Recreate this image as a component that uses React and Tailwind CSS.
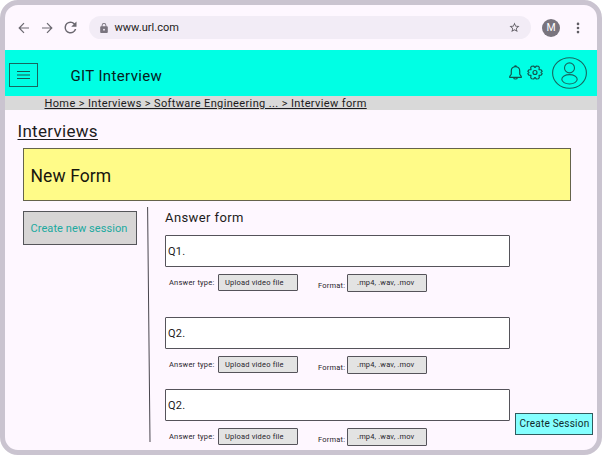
import React from 'react';

function BrowserBar() {
  return (
    <div className="flex h-[45px] shrink-0 items-center text-[#6b6870]">
      <svg className="ml-[12px] h-[14px] w-[14px]" viewBox="0 0 14 14" fill="none" stroke="currentColor" strokeWidth="1.2">
        <path d="M12 7H2.2M7 2.2L2.2 7L7 11.8" />
      </svg>
      <svg className="ml-[9px] h-[14px] w-[14px]" viewBox="0 0 14 14" fill="none" stroke="currentColor" strokeWidth="1.2">
        <path d="M2 7h9.8M7 2.2L11.8 7L7 11.8" />
      </svg>
      <svg className="ml-[9px] h-[15px] w-[15px]" viewBox="2 2 20 20" fill="currentColor">
        <path d="M17.65 6.35A7.96 7.96 0 0 0 12 4a8 8 0 1 0 7.73 10h-2.08A6 6 0 1 1 12 6c1.66 0 3.14.69 4.22 1.78L13 11h7V4z" />
      </svg>
      <div className="ml-[11px] flex h-[23px] w-[442px] items-center rounded-full bg-[#f2ecf6]">
        <svg className="ml-[11px] h-[10px] w-[8px]" viewBox="4 1 16 21" fill="#79747e">
          <path d="M18 8h-1V6A5 5 0 0 0 7 6v2H6a2 2 0 0 0-2 2v10c0 1.1.9 2 2 2h12a2 2 0 0 0 2-2V10a2 2 0 0 0-2-2zm-6 9a2 2 0 1 1 0-4 2 2 0 0 1 0 4zM8.9 8V6a3.1 3.1 0 0 1 6.2 0v2z" />
        </svg>
        <span className="ml-[6.5px] text-[11px] leading-none tracking-[0.03px] text-[#1d1b20]">www.url.com</span>
        <svg className="mr-[11px] ml-auto h-[11px] w-[11px]" viewBox="1 1 22 22" fill="#605d64">
          <path d="M22 9.24l-7.19-.62L12 2 9.19 8.63 2 9.24l5.46 4.73L5.82 21 12 17.27 18.18 21l-1.63-7.03zM12 15.4l-3.76 2.27 1-4.28-3.32-2.88 4.38-.38L12 6.1l1.71 4.04 4.38.38-3.32 2.88 1 4.28z" />
        </svg>
      </div>
      <div className="ml-[11px] flex h-[18px] w-[18px] items-center justify-center rounded-full bg-[#79747e] pt-px text-[10.5px] leading-none text-white">M</div>
      <svg className="ml-[16px] h-[12px] w-[4px]" viewBox="0 0 4 12" fill="#605d64">
        <circle cx="2" cy="1.9" r="1.3" />
        <circle cx="2" cy="6" r="1.3" />
        <circle cx="2" cy="10.1" r="1.3" />
      </svg>
    </div>
  );
}

function AppHeader() {
  return (
    <header className="flex h-[46px] shrink-0 items-center bg-[#00ffe4]">
      <div className="ml-[4px] mt-[4px] flex h-[24px] w-[29px] items-center justify-center border border-[#17665f]">
        <svg className="h-[10px] w-[13px]" viewBox="0 0 13 10" stroke="#17564f" strokeWidth="1">
          <path d="M0 1.5h13M0 5h13M0 8.5h13" />
        </svg>
      </div>
      <h1 className="mt-[6px] ml-[32.5px] text-[15px] leading-none tracking-[0.36px] text-[#07201d]">GIT Interview</h1>
      <svg className="mr-[5px] ml-auto h-[16px] w-[13px]" viewBox="0 0 12 16" preserveAspectRatio="none" fill="none" stroke="#14544e" strokeWidth="1.1">
        <path d="M6 1.7C3.4 1.7 2.1 3.6 2.1 6v3.2L.7 11.4v1h10.6v-1L9.9 9.2V6C9.9 3.6 8.6 1.7 6 1.7zM4.3 12.8c.3 1.5 3.1 1.5 3.4 0M5.2 1.5c.1-.8 1.5-.8 1.6 0" strokeLinejoin="round" />
      </svg>
      <svg className="mb-[1px] h-[15px] w-[16px]" viewBox="0 0 16 15" fill="none" stroke="#14544e" strokeWidth="1.15" strokeLinejoin="round">
        <path d="M4.7 1.2L6.6 1L8 2.5L9.4 1L11.3 1.2L12.3 2.4L12 4.6L14.1 4.8L15.2 6.4L14 7.5L15.2 8.6L14.1 10.2L12 10.4L12.3 12.6L11.3 13.8L9.4 14L8 12.5L6.6 14L4.7 13.8L3.7 12.6L4 10.4L1.9 10.2L.8 8.6L2 7.5L.8 6.4L1.9 4.8L4 4.6L3.7 2.4Z" />
        <circle cx="8" cy="7.5" r="2" />
      </svg>
      <svg className="mr-[10px] mb-[1px] ml-[9px] h-[32px] w-[35px]" viewBox="0 0 35 32" fill="none" stroke="#17665f" strokeWidth="1.1">
        <ellipse cx="17.5" cy="16" rx="16.9" ry="15.3" />
        <circle cx="17.5" cy="10.9" r="5" />
        <ellipse cx="17.5" cy="22.3" rx="7.7" ry="4.7" />
      </svg>
    </header>
  );
}

function Question({ label }) {
  return (
    <div>
      <div className="flex h-[32px] w-[345px] items-center rounded-[1px] border border-[#55535a] bg-white pl-[2px] text-[11px] leading-none tracking-[0.2px] text-[#1d1b20]">
        {label}
      </div>
      <div className="mt-[7px] flex h-[18px] items-start pl-[4px] text-[7.5px] leading-none text-[#27242b]">
        <span className="mt-[5px] w-[49px] tracking-[0.21px] whitespace-nowrap">Answer type:</span>
        <div className="flex h-[17px] w-[80px] items-center rounded-[1px] border border-[#55535a] bg-[#e3e3e3] pl-[6px] tracking-[0.2px]">Upload video file</div>
        <span className="mt-[8px] ml-[20px] w-[29px] tracking-[0.2px]">Format:</span>
        <div className="flex h-[18px] w-[80px] items-center rounded-[1px] border border-[#55535a] bg-[#e3e3e3] pb-[1px] pl-[9px] tracking-[0.15px]">.mp4, .wav, .mov</div>
      </div>
    </div>
  );
}

export default function App() {
  return (
    <div className="h-[455px] w-[602px] overflow-hidden bg-white font-['Roboto',sans-serif]">
      <div className="flex h-full flex-col overflow-hidden rounded-[18px] border-[5px] border-[#cac4d0] bg-[#fef7ff]">
        <BrowserBar />
        <AppHeader />
        <nav className="h-[14px] shrink-0 bg-[#d9d9d9] pl-[39.5px] text-[11px] leading-[16px] tracking-[0.37px] whitespace-nowrap text-[#1d1b20] underline underline-offset-[1px]">
          Home &gt; Interviews &gt; Software Engineering ... &gt; Interview form
        </nav>
        <h2 className="ml-[12.5px] h-[38px] pt-[11px] text-[17px] leading-[20px] tracking-[0.3px] text-[#1d1b20] underline decoration-1 underline-offset-[2px]">Interviews</h2>
        <div className="ml-[18px] flex h-[53px] w-[548px] shrink-0 items-center border border-[#65634b] bg-[#fffb88] pt-[4px] pl-[6.5px] text-[17.5px] leading-none tracking-[0.1px] text-[#17160d]">
          New Form
        </div>
        <main className="flex min-h-0 flex-1">
          <button className="mt-[10px] ml-[18px] flex h-[34px] w-[114px] shrink-0 items-center border border-[#55555a] bg-[#d7d5d5] pl-[6.5px] text-[11px] leading-none tracking-[0.08px] whitespace-nowrap text-[#20a99f]">
            Create new session
          </button>
          <svg className="mt-[6px] ml-[10px] h-[235px] w-[4px] shrink-0" viewBox="0 0 4 235" stroke="#49464e" strokeWidth="1">
            <path d="M.6 0L3 235" />
          </svg>
          <section className="ml-[14px] w-[345px] shrink-0">
            <h3 className="h-[34px] pt-[9px] text-[13px] leading-[15px] tracking-[0.4px] text-[#1d1b20]">Answer form</h3>
            <Question label="Q1." />
            <div className="mt-[25px]"><Question label="Q2." /></div>
            <div className="mt-[15px]"><Question label="Q2." /></div>
          </section>
          <button className="mb-[15px] ml-[5px] flex h-[22px] w-[78px] shrink-0 items-center self-end border border-[#315b5e] bg-[#85ffff] pl-[3.5px] text-[10px] leading-none tracking-[0.22px] whitespace-nowrap text-[#102a2b]">
            Create Session
          </button>
        </main>
      </div>
    </div>
  );
}
